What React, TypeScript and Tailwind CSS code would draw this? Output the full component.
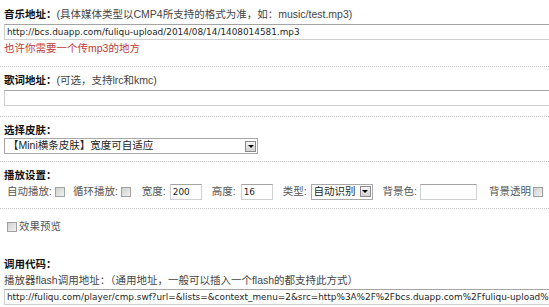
import React from "react";

function Checkbox({ className = "" }: { className?: string }) {
  return (
    <span
      className={
        "inline-block h-[10px] w-[10px] shrink-0 border border-[#a0a0a0] bg-linear-to-br from-[#d0d0d0] to-[#f2f2f2] " +
        className
      }
    />
  );
}

function DropBtn() {
  return (
    <span className="flex h-[11px] w-[11px] shrink-0 items-center justify-center border border-[#8a8a8a] bg-linear-to-b from-[#f6f6f6] to-[#d2d2d2]">
      <span className="h-0 w-0 border-l-[3px] border-r-[3px] border-t-[3px] border-l-transparent border-r-transparent border-t-black" />
    </span>
  );
}

function TextInput({ value = "", className = "" }: { value?: string; className?: string }) {
  return (
    <input
      readOnly
      value={value}
      className={
        "block h-[16px] border border-[#cfcfcf] border-t-[#a4a4a4] bg-white px-[2px] font-['DejaVu_Sans',sans-serif] text-[8.9px] text-[#1e1e1e] outline-none " +
        className
      }
    />
  );
}

export default function App() {
  return (
    <div className="h-[307px] w-[549px] overflow-hidden bg-white font-['Liberation_Sans','Noto_Sans_CJK_SC',sans-serif] text-[10.5px] text-[#444]">
      {/* 音乐地址 */}
      <div className="border-b border-dotted border-[#c4c4c4] pb-[9px] pl-[4px] pt-[5px]">
        <div className="h-[18px] whitespace-nowrap leading-[18px]">
          <b className="text-[#111]">音乐地址：</b>(具体媒体类型以CMP4所支持的格式为准，如：music/test.mp3)
        </div>
        <TextInput
          className="mt-[1px] w-[600px]"
          value="http://bcs.duapp.com/fuliqu-upload/2014/08/14/1408014581.mp3"
        />
        <div className="h-[17px] whitespace-nowrap leading-[17px] text-[#c23a32]">也许你需要一个传mp3的地方</div>
      </div>

      {/* 歌词地址 */}
      <div className="border-b border-dotted border-[#c4c4c4] pb-[10px] pl-[4px] pt-[4px]">
        <div className="h-[18px] whitespace-nowrap leading-[18px]">
          <b className="text-[#111]">歌词地址：</b>(可选，支持lrc和kmc)
        </div>
        <TextInput className="mt-[1px] w-[600px]" />
      </div>

      {/* 选择皮肤 */}
      <div className="border-b border-dotted border-[#c4c4c4] pb-[7px] pl-[4px] pt-[5px]">
        <div className="h-[16px] whitespace-nowrap leading-[16px]">
          <b className="text-[#111]">选择皮肤：</b>
        </div>
        <div className="flex h-[16px] w-[254px] items-center justify-between border border-[#a8a8a8] bg-white pl-[3px] pr-[1px] text-[#1e1e1e]">
          <span className="whitespace-nowrap">【Mini横条皮肤】宽度可自适应</span>
          <DropBtn />
        </div>
      </div>

      {/* 播放设置 */}
      <div className="border-b border-dotted border-[#c4c4c4] pb-[8px] pl-[4px] pt-[5px]">
        <div className="h-[16px] whitespace-nowrap leading-[16px]">
          <b className="text-[#111]">播放设置：</b>
        </div>
        <div className="flex h-[17px] items-center whitespace-nowrap pl-[3px] text-[#555]">
          <span>自动播放:</span>
          <Checkbox className="ml-[3px]" />
          <span className="ml-[8px]">循环播放:</span>
          <Checkbox className="ml-[3px]" />
          <span className="ml-[11px]">宽度:</span>
          <TextInput className="ml-[4px] w-[32px] border-[#b4b4b4]" value="200" />
          <span className="ml-[10px]">高度:</span>
          <TextInput className="ml-[5px] w-[32px] border-[#b4b4b4]" value="16" />
          <span className="ml-[10px]">类型:</span>
          <div className="ml-[4px] flex h-[16px] w-[62px] items-center justify-between border border-[#a8a8a8] bg-white pl-[2px] pr-[1px] text-[#1e1e1e]">
            <span>自动识别</span>
            <DropBtn />
          </div>
          <span className="ml-[10px]">背景色:</span>
          <TextInput className="ml-[3px] w-[57px] border-[#b4b4b4]" />
          <span className="ml-[12px]">背景透明</span>
          <Checkbox className="ml-[2px]" />
        </div>
      </div>

      {/* 效果预览 + 调用代码 */}
      <div className="pl-[4px] pt-[11px]">
        <div className="flex h-[14px] items-center whitespace-nowrap pl-[3px] text-[#555]">
          <Checkbox />
          <span className="ml-[2px]">效果预览</span>
        </div>
        <div className="mt-[22px] h-[16px] whitespace-nowrap leading-[16px]">
          <b className="text-[#111]">调用代码：</b>
        </div>
        <div className="h-[16px] whitespace-nowrap leading-[16px]">
          播放器flash调用地址：（通用地址，一般可以插入一个flash的都支持此方式）
        </div>
        <TextInput
          className="mt-[1px] w-[700px]"
          value="http://fuliqu.com/player/cmp.swf?url=&lists=&context_menu=2&src=http%3A%2F%2Fbcs.duapp.com%2Ffuliqu-upload%2F2014%2F08%2F14%2F1408014581.mp3"
        />
      </div>
    </div>
  );
}
